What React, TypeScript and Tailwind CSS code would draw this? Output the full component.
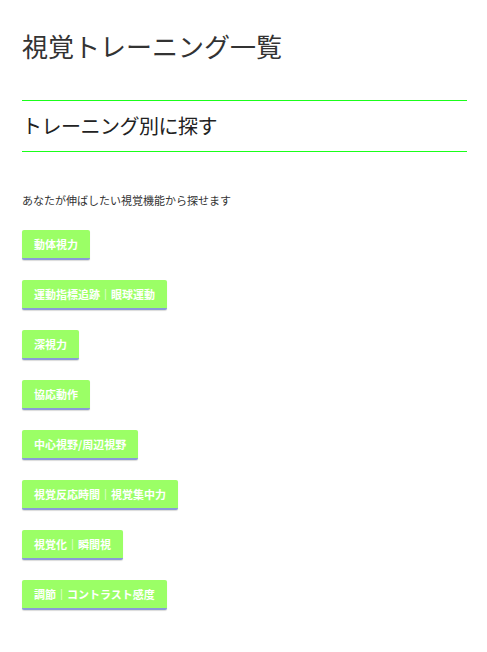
import React from 'react';

const trainings = [
  '動体視力',
  '運動指標追跡｜眼球運動',
  '深視力',
  '協応動作',
  '中心視野/周辺視野',
  '視覚反応時間｜視覚集中力',
  '視覚化｜瞬間視',
  '調節｜コントラスト感度',
];

export default function App() {
  return (
    <div
      className="min-h-screen bg-white pl-[22px] pr-[20px] text-[#333]"
      style={{ fontFamily: '"Noto Sans CJK JP", "Noto Sans", sans-serif' }}
    >
      <h1 className="pt-[27px] text-[26px] leading-[38px] font-normal">視覚トレーニング一覧</h1>

      <h2 className="mt-[35px] border-y border-[#1aff1a] py-[11px] text-[20px] leading-[28px] font-normal text-[#222] tracking-[-0.5px]">
        トレーニング別に探す
      </h2>

      <p className="mt-[40px] text-[11px] leading-[16px]">あなたが伸ばしたい視覚機能から探せます</p>

      {/* トレーニング一覧のボタン */}
      <div className="mt-[22px] flex flex-col items-start gap-[20px]">
        {trainings.map(t => (
          <button
            key={t}
            className="h-[30px] rounded-[2px] border-b-2 border-[#8a9ad8] bg-[#9bff66] px-[12px] text-[11px] font-bold leading-[28px] text-white shadow-[0_1px_1px_rgba(0,0,0,0.15)]"
          >
            {t}
          </button>
        ))}
      </div>
    </div>
  );
}
